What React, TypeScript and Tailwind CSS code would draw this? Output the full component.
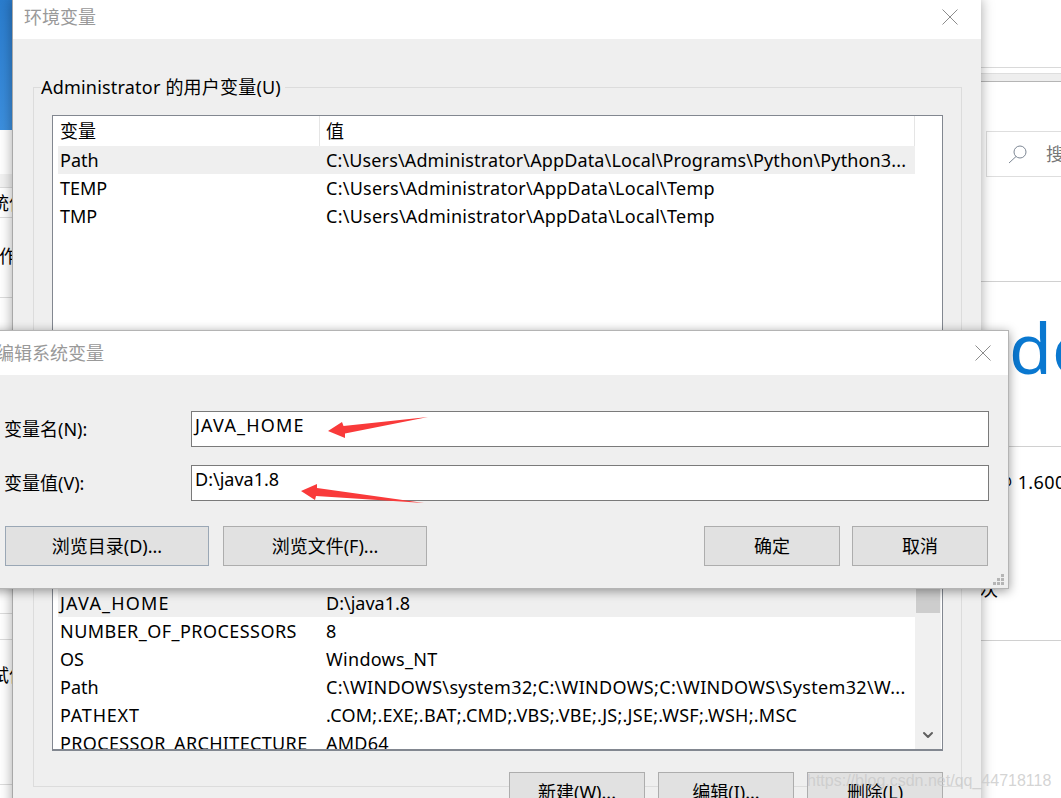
import React from 'react';
import { ChevronDown } from 'lucide-react';

const FONT = "font-['Noto_Sans','Noto_Sans_CJK_SC',sans-serif]";

interface RowProps {
  name: string;
  value: string;
  active?: boolean;
  nameClass?: string;
  valueClass?: string;
}

const Row = ({ name, value, active, nameClass = '', valueClass = 'tracking-[0.25px]' }: RowProps) => (
  <div className={`flex h-7 shrink-0 items-center text-[18px] text-black ${active ? 'bg-[#efefef]' : ''}`}>
    <div className={`w-[262px] shrink-0 overflow-hidden whitespace-nowrap pl-[2px] ${nameClass}`}>{name}</div>
    <div className={`min-w-0 flex-1 overflow-hidden whitespace-nowrap pl-[6px] ${valueClass}`}>{value}</div>
  </div>
);

const CloseIcon = () => (
  <svg width="16" height="16" viewBox="0 0 16 16" className="text-[#8c8c8c]">
    <path d="M0.5 0.5L15.5 15.5M15.5 0.5L0.5 15.5" stroke="currentColor" strokeWidth="1" fill="none" />
  </svg>
);

const DialogButton = ({ label, className }: { label: string; className: string }) => (
  <button className={`flex h-10 items-center justify-center border bg-[#e1e1e1] text-[18px] text-black ${className}`}>
    {label}
  </button>
);

// 后面的设置页面，只露出窗口两侧的一点
const Backdrop = () => (
  <>
    <div className="absolute left-0 top-0 h-[130px] w-[13px] bg-gradient-to-b from-[#2a7ccd] to-[#3c8fde]" />
    <div className="absolute left-0 top-[174px] h-[14px] w-[13px] border-b border-[#dcdcdc] bg-[#f2f2f2]" />
    <div className="absolute left-0 top-[217px] h-px w-[13px] bg-[#dcdcdc]" />
    <div className="absolute left-[-9px] top-[190px] whitespace-nowrap text-[18px] text-black">统信</div>
    <div className="absolute left-[-1px] top-[243px] text-[18px] text-black">作</div>
    <div className="absolute left-0 top-[297px] h-px w-[13px] bg-[#dcdcdc]" />
    <div className="absolute left-0 top-[613px] h-px w-[13px] bg-[#dcdcdc]" />
    <div className="absolute left-0 top-[639px] h-px w-[13px] bg-[#dcdcdc]" />
    <div className="absolute left-[-9px] top-[662px] whitespace-nowrap text-[18px] text-black">试信</div>
    <div className="absolute left-0 top-[784px] h-px w-[13px] bg-[#dcdcdc]" />

    <div className="absolute left-[981px] top-[67px] h-px w-[80px] bg-[#d9d9d9]" />
    <div className="absolute left-[981px] top-[73px] h-[9px] w-[80px] border-y border-b-[#b5b5b5] border-t-[#dedede] bg-[#eeeeee]" />
    <div className="absolute left-[986px] top-[131px] flex h-[46px] w-[90px] items-center border border-[#dedede] pl-[21px]">
      <svg width="20" height="20" viewBox="0 0 20 20" className="text-[#7d8794]">
        <circle cx="12" cy="8" r="6" stroke="currentColor" fill="none" />
        <path d="M8 12.5L1 19" stroke="currentColor" fill="none" />
      </svg>
      <span className="ml-[18px] text-[18px] text-[#777]">搜</span>
    </div>
    <div className="absolute left-[981px] top-[281px] h-px w-[80px] bg-[#d0d0d0]" />
    <div className="absolute left-[1009px] top-[299px] text-[70px] leading-[96px] text-[#0a78d0]">do</div>
    <div className="absolute left-[981px] top-[446px] h-px w-[80px] bg-[#d0d0d0]" />
    <div className="absolute left-[996px] top-[469px] whitespace-nowrap text-[18px] tracking-[0.4px] text-black">@ 1.600</div>
    <div className="absolute left-[980px] top-[576px] text-[18px] text-black">次</div>
    <div className="absolute left-[981px] top-[640px] h-px w-[80px] bg-[#d0d0d0]" />
  </>
);

const App: React.FC = () => {
  return (
    <div className={`relative h-[798px] w-[1061px] overflow-hidden bg-white ${FONT}`}>
      <Backdrop />

      {/* 环境变量 */}
      <div className="absolute left-[12px] top-[-1px] flex h-[830px] w-[969px] flex-col border-l border-[#a8a8a8] bg-[#efefef] shadow-[0_0_12px_rgba(0,0,0,0.35)]">
        <div className="flex h-10 shrink-0 items-center justify-between bg-white pb-1 pl-[11px] pr-[23px]">
          <span className="text-[18px] text-[#999]">环境变量</span>
          <CloseIcon />
        </div>
        <div className="relative flex-1 pl-[20px] pr-[19px] pt-[48px]">
          <div className="absolute left-[28px] top-[35px] z-10 bg-[#efefef] pr-1 text-[18px] leading-[26px] tracking-[0.2px] text-black">
            Administrator 的用户变量(U)
          </div>
          <div className="h-[700px] border border-[#dcdcdc] px-[18px] pt-[27px]">
            <div className="flex h-[636px] flex-col overflow-hidden border border-[#828790] bg-white pl-[5px]">
              <div className="flex h-[30px] w-[857px] shrink-0 items-center border-r border-[#e5e5e5] text-[18px] text-black">
                <div className="h-full w-[262px] shrink-0 border-r border-[#e5e5e5] pl-[2px] leading-[30px]">变量</div>
                <div className="pl-[6px]">值</div>
              </div>
              <div className="flex w-[857px] flex-col">
                <Row name="Path" value="C:\Users\Administrator\AppData\Local\Programs\Python\Python3..." active valueClass="tracking-[0.13px]" />
                <Row name="TEMP" value="C:\Users\Administrator\AppData\Local\Temp" />
                <Row name="TMP" value="C:\Users\Administrator\AppData\Local\Temp" />
              </div>
            </div>
          </div>
        </div>
      </div>

      {/* 系统变量列表 */}
      <div className="absolute left-[52px] top-[560px] flex h-[190px] w-[891px] overflow-hidden border border-[#828790] bg-white pl-[5px]">
        <div className="flex w-[857px] flex-col pt-[28px]">
          <Row name="JAVA_HOME" value="D:\java1.8" active nameClass="tracking-[1.2px]" valueClass="tracking-normal" />
          <Row name="NUMBER_OF_PROCESSORS" value="8" nameClass="tracking-[0.45px]" />
          <Row name="OS" value="Windows_NT" valueClass="tracking-[0.3px]" />
          <Row name="Path" value="C:\WINDOWS\system32;C:\WINDOWS;C:\WINDOWS\System32\W..." valueClass="tracking-[0.33px]" />
          <Row name="PATHEXT" value=".COM;.EXE;.BAT;.CMD;.VBS;.VBE;.JS;.JSE;.WSF;.WSH;.MSC" nameClass="tracking-[0.8px]" />
          <Row name="PROCESSOR_ARCHITECTURE" value="AMD64" nameClass="tracking-[0.35px]" />
        </div>
        <div className="relative flex w-[26px] flex-col items-center bg-[#f0f0f0]">
          <div className="mt-[28px] h-[24px] w-[24px] bg-[#cdcdcd]" />
          <ChevronDown size={16} strokeWidth={3} className="absolute bottom-[6px] text-[#606060]" />
        </div>
      </div>

      <div className="absolute left-[509px] top-[772px] flex gap-[13px]">
        <DialogButton label="新建(W)..." className="w-[136px] border-[#adadad]" />
        <DialogButton label="编辑(I)..." className="w-[136px] border-[#adadad]" />
        <DialogButton label="删除(L)" className="w-[136px] border-[#adadad]" />
      </div>

      {/* 编辑系统变量 */}
      <div className="absolute left-[-11px] top-[330px] flex h-[259px] w-[1020px] flex-col border border-[#b4b4b4] bg-[#efefef] shadow-[0_2px_10px_rgba(0,0,0,0.4)]">
        <div className="flex h-[44px] shrink-0 items-center justify-between bg-white pl-[6px] pr-[17px]">
          <span className="text-[18px] text-[#999]">编辑系统变量</span>
          <CloseIcon />
        </div>
        <div className="flex flex-1 flex-col pl-[14px] pr-[19px] pt-[36px]">
          <div className="flex h-9 items-center">
            <label className="w-[187px] text-[18px] text-black">变量名(N):</label>
            <div className="flex h-full flex-1 items-start border border-[#7a7a7a] bg-white pl-[3px] text-[18px] leading-[27px] tracking-[1.2px] text-black">JAVA_HOME</div>
          </div>
          <div className="mt-[18px] flex h-9 items-center">
            <label className="w-[187px] text-[18px] text-black">变量值(V):</label>
            <div className="flex h-full flex-1 items-start border border-[#7a7a7a] bg-white pl-[3px] text-[18px] leading-[27px] text-black">D:\java1.8</div>
          </div>
          <div className="mt-[25px] flex items-center">
            <DialogButton label="浏览目录(D)..." className="ml-[1px] w-[204px] border-[#9aa7b5]" />
            <DialogButton label="浏览文件(F)..." className="ml-[14px] w-[204px] border-[#adadad]" />
            <div className="flex-1" />
            <DialogButton label="确定" className="w-[136px] border-[#adadad]" />
            <DialogButton label="取消" className="ml-[12px] mr-px w-[136px] border-[#adadad]" />
          </div>
        </div>
        <svg width="12" height="12" viewBox="0 0 12 12" className="absolute bottom-[2px] right-[3px] text-[#b5b5b5]">
          <path d="M8 0h3v3H8zM4 4h3v3H4zM8 4h3v3H8zM0 8h3v3H0zM4 8h3v3H4zM8 8h3v3H8z" fill="currentColor" />
        </svg>
      </div>

      {/* 红色箭头标注 */}
      <svg width="1061" height="798" className="pointer-events-none absolute left-0 top-0">
        <path d="M328 431L342 422L343.5 426L428 417L345 433.5L345 438Z" fill="#f93a3a" />
        <path d="M301 491L317 484L317 488L424 503L316 496L315 500Z" fill="#f93a3a" />
      </svg>

      <div className="absolute left-[807px] top-[769px] font-['Liberation_Sans',sans-serif] text-[16px] text-[#c9c9c9]/80">
        https://blog.csdn.net/qq_44718118
      </div>
    </div>
  );
};

export default App;
